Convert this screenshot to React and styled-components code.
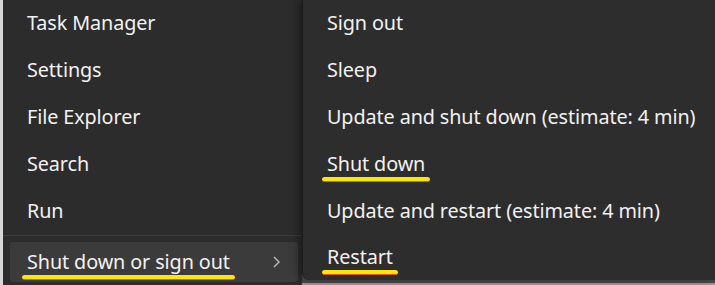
import React from "react";
import styled, { createGlobalStyle } from "styled-components";

const GlobalStyle = createGlobalStyle`
  html, body {
    margin: 0;
    padding: 0;
    background: #4a4a4a;
  }
  body {
    font-family: "Noto Sans", "Open Sans", sans-serif;
    overflow: hidden;
  }
`;

const leftItems = ["Task Manager", "Settings", "File Explorer", "Search", "Run"];

const subItems = [
  { label: "Sign out" },
  { label: "Sleep" },
  { label: "Update and shut down (estimate: 4 min)" },
  { label: "Shut down", marked: true },
  { label: "Update and restart (estimate: 4 min)" },
  { label: "Restart", marked: true },
];

const App = () => {
  return (
    <Page>
      <GlobalStyle />
      <LeftMenu>
        {leftItems.map((item) => (
          <Item key={item}>{item}</Item>
        ))}
        <Divider />
        <ActiveItem>
          <Mark>Shut down or sign out</Mark>
          <Chevron width="10" height="14" viewBox="0 0 10 14">
            <polyline points="2,2 7,7 2,12" fill="none" stroke="#bdbdbd" strokeWidth="1.4" />
          </Chevron>
        </ActiveItem>
      </LeftMenu>
      <SubMenu>
        {subItems.map((item) => (
          <SubItem key={item.label}>
            {item.marked ? <Mark>{item.label}</Mark> : item.label}
          </SubItem>
        ))}
      </SubMenu>
    </Page>
  );
};

const Page = styled.div`
  display: flex;
  width: 715px;
  height: 285px;
  background: #4a4a4a;
  border-bottom: 2px solid #9a9a9a;
  box-sizing: border-box;
`;

const LeftMenu = styled.div`
  width: 302px;
  height: 285px;
  flex-shrink: 0;
  box-sizing: border-box;
  border-left: 3px solid #d6d6d6;
  background: #2c2c2c;
  display: flex;
  flex-direction: column;
  position: relative;
  z-index: 1;
`;

const Item = styled.div`
  height: 47px;
  box-sizing: border-box;
  padding: 0 0 2px 24px;
  display: flex;
  align-items: center;
  color: #f2f2f2;
  font-size: 19.8px;
  letter-spacing: -0.1px;
`;

const Divider = styled.div`
  height: 1px;
  background: #3c3c3c;
  margin: 0 0 6px 0;
`;

const ActiveItem = styled.div`
  height: 40px;
  box-sizing: border-box;
  margin: 0 4px 0 7px;
  border-radius: 4px;
  background: #3b3b3b;
  display: flex;
  align-items: center;
  justify-content: space-between;
  padding: 0 16px 1px 17px;
  color: #f2f2f2;
  font-size: 19.8px;
  letter-spacing: -0.1px;
`;

const Chevron = styled.svg`
  display: block;
  margin-top: 1px;
`;

const SubMenu = styled.div`
  flex: 1;
  height: 280px;
  background: #2d2d2d;
  border-left: 1px solid #1c1c1c;
  border-bottom-left-radius: 8px;
  box-shadow: -4px 0 8px rgba(0, 0, 0, 0.35);
  padding-left: 24px;
  position: relative;
  z-index: 2;
  display: flex;
  flex-direction: column;
`;

const SubItem = styled.div`
  height: 47px;
  box-sizing: border-box;
  padding-bottom: 2px;
  flex-shrink: 0;
  display: flex;
  align-items: center;
  color: #f2f2f2;
  font-size: 19.8px;
  letter-spacing: -0.1px;
  &:last-child {
    height: 44px;
  }
`;

const Mark = styled.span`
  position: relative;
  &::after {
    content: "";
    position: absolute;
    left: -5px;
    right: -5px;
    bottom: -5px;
    height: 4px;
    background: #ffe600;
    border-bottom: 1px solid #e8541a;
    border-radius: 3px;
  }
`;

export default App;
